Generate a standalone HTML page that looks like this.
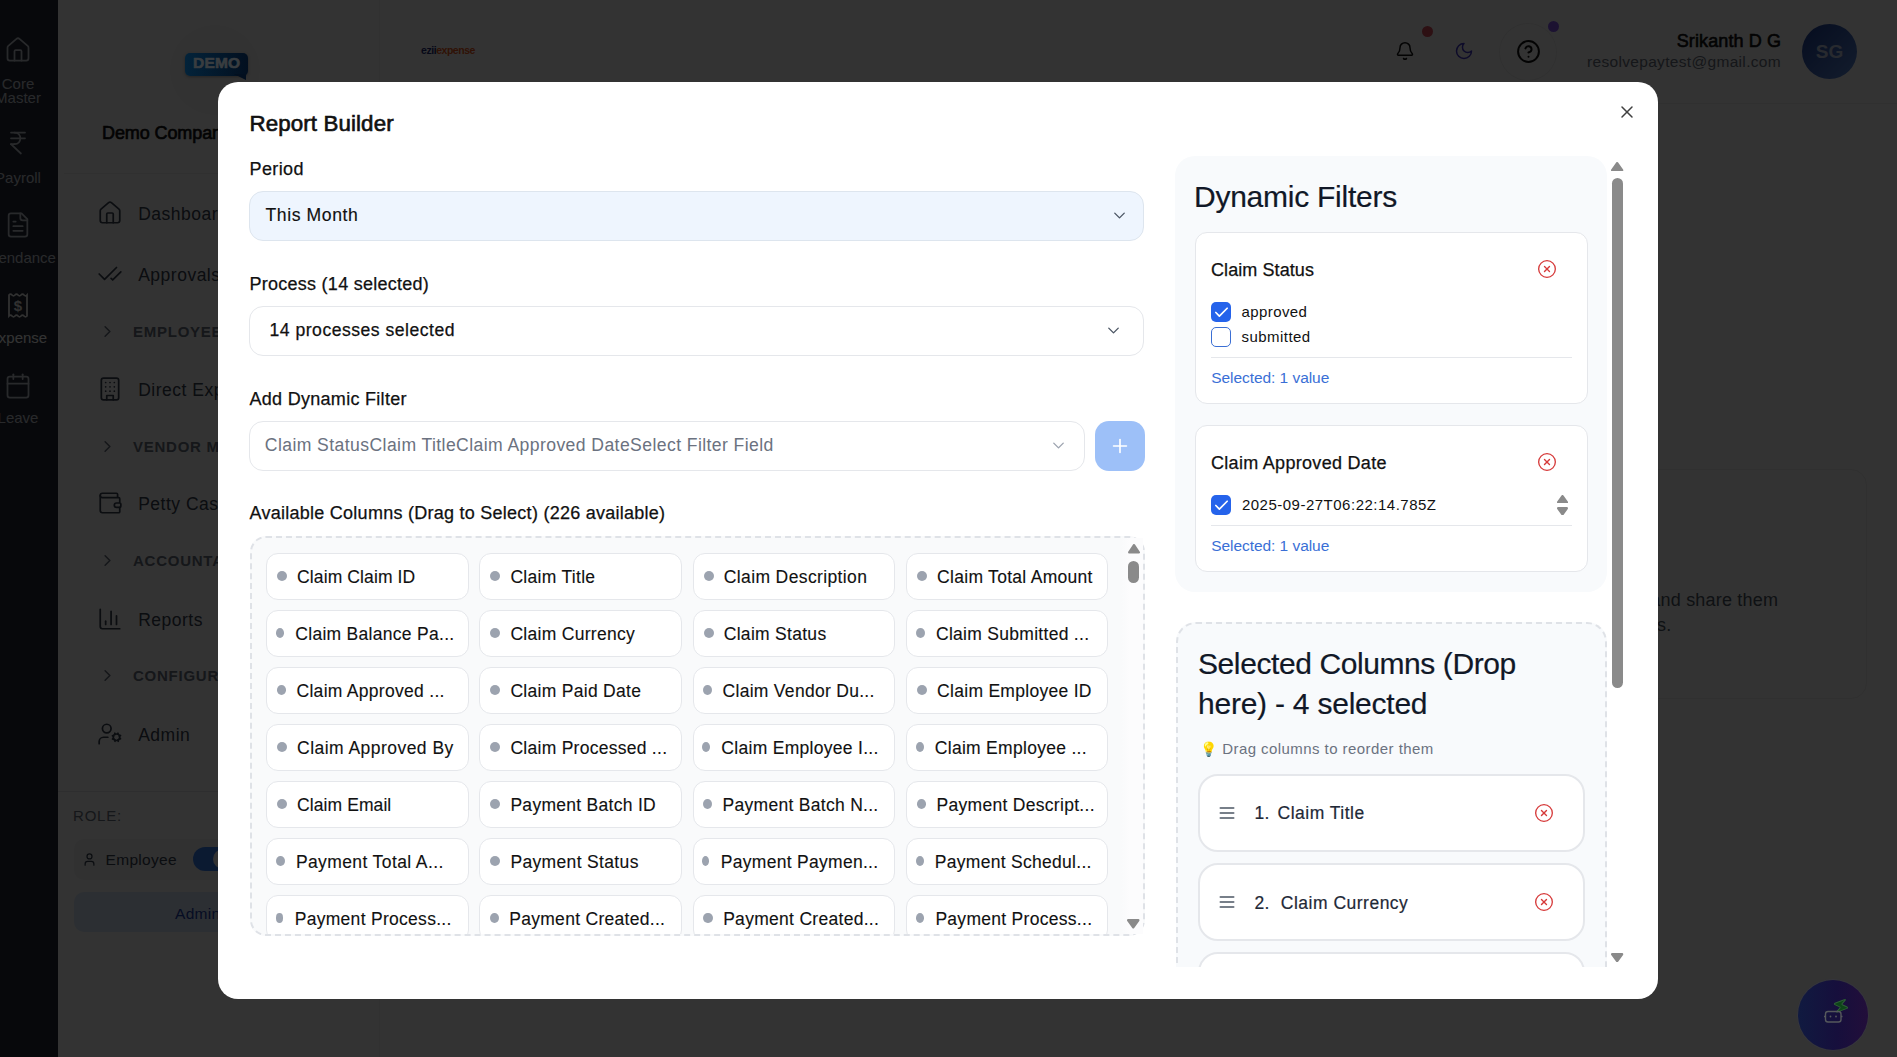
<!DOCTYPE html>
<html><head><meta charset="utf-8">
<style>
*{box-sizing:border-box;margin:0;padding:0}
html,body{width:1897px;height:1057px;overflow:hidden;background:#fff;font-family:"Liberation Sans",sans-serif;color:#111}
.abs{position:absolute}
.t{position:absolute;white-space:nowrap}
#overlay{position:absolute;left:0;top:0;width:1897px;height:1057px;background:rgba(0,0,0,0.8)}
</style></head><body>

<div class="abs" style="left:0px;top:0px;width:1897px;height:1057px;background:#fff"></div>
<div class="abs" style="left:0px;top:0px;width:58px;height:1057px;background:#232b3a;overflow:hidden"></div>
<div class="abs" style="left:0;top:0;width:58px;height:1057px;overflow:hidden">
<svg class="abs" style="left:4.0px;top:35.8px;" width="28" height="28" viewBox="0 0 24 24" fill="none" stroke="#c9ced6" stroke-width="1.5" stroke-linecap="round" stroke-linejoin="round"><path d="M15 21v-8a1 1 0 0 0-1-1h-4a1 1 0 0 0-1 1v8"/><path d="M3 10a2 2 0 0 1 .709-1.528l7-5.999a2 2 0 0 1 2.582 0l7 5.999A2 2 0 0 1 21 10v9a2 2 0 0 1-2 2H5a2 2 0 0 1-2-2z"/></svg>
<div class="t" style="left:-22px;width:80px;text-align:center;top:76.1px;font-size:15px;line-height:15px;color:#c9ced6">Core</div>
<div class="t" style="left:-22px;width:80px;text-align:center;top:90.0px;font-size:15px;line-height:15px;color:#c9ced6">Master</div>
<svg class="abs" style="left:4.0px;top:129.0px;" width="28" height="28" viewBox="0 0 24 24" fill="none" stroke="#c9ced6" stroke-width="1.5" stroke-linecap="round" stroke-linejoin="round"><path d="M6 3h12"/><path d="M6 8h12"/><path d="m6 13 8.5 8"/><path d="M6 13h3"/><path d="M9 13c6.667 0 6.667-10 0-10"/></svg>
<div class="t" style="left:-22px;width:80px;text-align:center;top:170.2px;font-size:15px;line-height:15px;color:#c9ced6">Payroll</div>
<svg class="abs" style="left:4.0px;top:210.6px;" width="28" height="28" viewBox="0 0 24 24" fill="none" stroke="#c9ced6" stroke-width="1.5" stroke-linecap="round" stroke-linejoin="round"><path d="M15 2H6a2 2 0 0 0-2 2v16a2 2 0 0 0 2 2h12a2 2 0 0 0 2-2V7Z"/><path d="M14 2v4a2 2 0 0 0 2 2h4"/><path d="M10 9H8"/><path d="M16 13H8"/><path d="M16 17H8"/></svg>
<div class="t" style="left:-22px;width:80px;text-align:center;top:250.10000000000002px;font-size:15px;line-height:15px;color:#c9ced6">Attendance</div>
<svg class="abs" style="left:7px;top:292px" width="22" height="27" viewBox="0 0 22 27" fill="none" stroke="#f2f2f2" stroke-width="1.8"><path d="M2 3 q1.5 -1.6 3 0 t3 0 t3 0 t3 0 t3 0 t3 0 V24 q-1.5 1.6 -3 0 t-3 0 t-3 0 t-3 0 t-3 0 t-3 0 Z"/><text x="11" y="19" text-anchor="middle" font-family="Liberation Sans" font-weight="700" font-size="15" fill="#f2f2f2" stroke="none">$</text></svg>
<div class="t" style="left:-22px;width:80px;text-align:center;top:330.3px;font-size:15px;line-height:15px;color:#ffffff">Expense</div>
<svg class="abs" style="left:4.0px;top:371.5px;" width="28" height="28" viewBox="0 0 24 24" fill="none" stroke="#c9ced6" stroke-width="1.5" stroke-linecap="round" stroke-linejoin="round"><path d="M8 2v4"/><path d="M16 2v4"/><rect width="18" height="18" x="3" y="4" rx="2"/><path d="M3 10h18"/></svg>
<div class="t" style="left:-22px;width:80px;text-align:center;top:409.8px;font-size:15px;line-height:15px;color:#c9ced6">Leave</div>
</div>
<div class="abs" style="left:58px;top:0px;width:322px;height:1057px;background:#fff;border-right:1px solid #f6f6f6"></div>
<div class="abs" style="left:170px;top:25px;width:90px;height:90px;border-radius:50%;background:#fafafa"></div>
<div class="t" style="left:102px;top:123.96px;font-size:18px;line-height:18px;color:#111;font-weight:400;letter-spacing:-0.1px;-webkit-text-stroke:0.65px #111;">Demo Company</div>
<div class="abs" style="left:64px;top:173px;width:310px;height:1px;background:#eee"></div>
<svg class="abs" style="left:97.3px;top:200.0px;" width="26" height="26" viewBox="0 0 24 24" fill="none" stroke="#374151" stroke-width="1.6" stroke-linecap="round" stroke-linejoin="round"><path d="M15 21v-8a1 1 0 0 0-1-1h-4a1 1 0 0 0-1 1v8"/><path d="M3 10a2 2 0 0 1 .709-1.528l7-5.999a2 2 0 0 1 2.582 0l7 5.999A2 2 0 0 1 21 10v9a2 2 0 0 1-2 2H5a2 2 0 0 1-2-2z"/></svg>
<div class="t" style="left:138.2px;top:206.09px;font-size:17.5px;line-height:17.5px;color:#374151;font-weight:400;letter-spacing:0.5px;">Dashboard</div>
<svg class="abs" style="left:97.3px;top:261.1px;" width="26" height="26" viewBox="0 0 24 24" fill="none" stroke="#374151" stroke-width="1.6" stroke-linecap="round" stroke-linejoin="round"><path d="M18 6 7 17l-5-5"/><path d="m22 10-7.5 7.5L13 16"/></svg>
<div class="t" style="left:138.2px;top:267.19px;font-size:17.5px;line-height:17.5px;color:#374151;font-weight:400;letter-spacing:0.5px;">Approvals</div>
<svg class="abs" style="left:98.1px;top:321.9px;" width="19" height="19" viewBox="0 0 24 24" fill="none" stroke="#6b7280" stroke-width="2" stroke-linecap="round" stroke-linejoin="round"><path d="m9 18 6-6-6-6"/></svg>
<div class="t" style="left:133px;top:323.90px;font-size:15px;line-height:15px;color:#6b7280;font-weight:700;letter-spacing:0.75px;">EMPLOYEE MANAGEMENT</div>
<svg class="abs" style="left:97.3px;top:376.1px;" width="26" height="26" viewBox="0 0 24 24" fill="none" stroke="#374151" stroke-width="1.6" stroke-linecap="round" stroke-linejoin="round"><rect width="16" height="20" x="4" y="2" rx="2" ry="2"/><path d="M9 22v-4h6v4"/><path d="M8 6h.01"/><path d="M16 6h.01"/><path d="M12 6h.01"/><path d="M12 10h.01"/><path d="M12 14h.01"/><path d="M16 10h.01"/><path d="M16 14h.01"/><path d="M8 10h.01"/><path d="M8 14h.01"/></svg>
<div class="t" style="left:138.2px;top:382.19px;font-size:17.5px;line-height:17.5px;color:#374151;font-weight:400;letter-spacing:0.5px;">Direct Expense</div>
<svg class="abs" style="left:98.1px;top:436.7px;" width="19" height="19" viewBox="0 0 24 24" fill="none" stroke="#6b7280" stroke-width="2" stroke-linecap="round" stroke-linejoin="round"><path d="m9 18 6-6-6-6"/></svg>
<div class="t" style="left:133px;top:438.70px;font-size:15px;line-height:15px;color:#6b7280;font-weight:700;letter-spacing:0.75px;">VENDOR MANAGEMENT</div>
<svg class="abs" style="left:97.3px;top:490.0px;" width="26" height="26" viewBox="0 0 24 24" fill="none" stroke="#374151" stroke-width="1.6" stroke-linecap="round" stroke-linejoin="round"><path d="M19 7V4a1 1 0 0 0-1-1H5a2 2 0 0 0 0 4h15a1 1 0 0 1 1 1v4h-3a2 2 0 0 0 0 4h3a1 1 0 0 0 1-1v-2a1 1 0 0 0-1-1"/><path d="M3 5v14a2 2 0 0 0 2 2h15a1 1 0 0 0 1-1v-4"/></svg>
<div class="t" style="left:138.2px;top:496.09px;font-size:17.5px;line-height:17.5px;color:#374151;font-weight:400;letter-spacing:0.5px;">Petty Cash</div>
<svg class="abs" style="left:98.1px;top:551.3px;" width="19" height="19" viewBox="0 0 24 24" fill="none" stroke="#6b7280" stroke-width="2" stroke-linecap="round" stroke-linejoin="round"><path d="m9 18 6-6-6-6"/></svg>
<div class="t" style="left:133px;top:553.30px;font-size:15px;line-height:15px;color:#6b7280;font-weight:700;letter-spacing:0.75px;">ACCOUNTANT</div>
<svg class="abs" style="left:97.3px;top:605.8px;" width="26" height="26" viewBox="0 0 24 24" fill="none" stroke="#374151" stroke-width="1.6" stroke-linecap="round" stroke-linejoin="round"><path d="M3 3v16a2 2 0 0 0 2 2h16"/><path d="M18 17V9"/><path d="M13 17V5"/><path d="M8 17v-3"/></svg>
<div class="t" style="left:138.2px;top:611.89px;font-size:17.5px;line-height:17.5px;color:#374151;font-weight:400;letter-spacing:0.5px;">Reports</div>
<svg class="abs" style="left:98.1px;top:665.8px;" width="19" height="19" viewBox="0 0 24 24" fill="none" stroke="#6b7280" stroke-width="2" stroke-linecap="round" stroke-linejoin="round"><path d="m9 18 6-6-6-6"/></svg>
<div class="t" style="left:133px;top:667.80px;font-size:15px;line-height:15px;color:#6b7280;font-weight:700;letter-spacing:0.75px;">CONFIGURATION</div>
<svg class="abs" style="left:97.3px;top:720.6999999999999px;" width="26" height="26" viewBox="0 0 24 24" fill="none" stroke="#374151" stroke-width="1.6" stroke-linecap="round" stroke-linejoin="round"><circle cx="18" cy="15" r="3"/><circle cx="9" cy="7" r="4"/><path d="M10 15H6a4 4 0 0 0-4 4v2"/><path d="m21.7 16.4-.9-.3"/><path d="m15.2 13.9-.9-.3"/><path d="m16.6 18.7.3-.9"/><path d="m19.1 12.2.3-.9"/><path d="m19.6 18.7-.4-1"/><path d="m16.8 12.3-.4-1"/><path d="m14.3 16.6 1-.4"/><path d="m20.7 13.8 1-.4"/></svg>
<div class="t" style="left:138.2px;top:726.79px;font-size:17.5px;line-height:17.5px;color:#374151;font-weight:400;letter-spacing:0.5px;">Admin</div>
<div class="abs" style="left:58px;top:791px;width:322px;height:1px;background:#e5e7eb"></div>
<div class="t" style="left:73px;top:808.30px;font-size:15px;line-height:15px;color:#6b7280;font-weight:400;letter-spacing:0.8px;">ROLE:</div>
<div class="abs" style="left:74px;top:839px;width:290px;height:41px;background:#f3f4f6;border-radius:10px"></div>
<svg class="abs" style="left:82.2px;top:852.0px;" width="15" height="15" viewBox="0 0 24 24" fill="none" stroke="#374151" stroke-width="2" stroke-linecap="round" stroke-linejoin="round"><path d="M19 21v-2a4 4 0 0 0-4-4H9a4 4 0 0 0-4 4v2"/><circle cx="12" cy="7" r="4"/></svg>
<div class="t" style="left:105.6px;top:851.88px;font-size:15.5px;line-height:15.5px;color:#374151;font-weight:400;letter-spacing:0.3px;">Employee</div>
<div class="abs" style="left:193px;top:847px;width:44px;height:24px;background:#3b82f6;border-radius:12px"></div>
<div class="abs" style="left:213px;top:849px;width:20px;height:20px;background:#fff;border-radius:50%"></div>
<div class="abs" style="left:74px;top:892px;width:290px;height:40px;background:#dbeafe;border-radius:10px"></div>
<div class="t" style="left:175px;top:905.88px;font-size:15.5px;line-height:15.5px;color:#1e40af;font-weight:400;letter-spacing:0.3px;">Admin</div>
<div class="abs" style="left:380px;top:0px;width:1517px;height:104px;background:#fff;border-bottom:1px solid #f0f0f0"></div>
<div class="t" style="left:421px;top:43px;font-size:10.5px;line-height:14px;font-weight:700;letter-spacing:-0.45px"><span style="color:#1e2a78">ezii</span><span style="color:#f05a1a">expense</span></div>
<svg class="abs" style="left:1395.0px;top:40.9px;" width="20" height="20" viewBox="0 0 24 24" fill="none" stroke="#111" stroke-width="1.8" stroke-linecap="round" stroke-linejoin="round"><path d="M10.268 21a2 2 0 0 0 3.464 0"/><path d="M3.262 15.326A1 1 0 0 0 4 17h16a1 1 0 0 0 .74-1.673C19.41 13.956 18 12.499 18 8A6 6 0 0 0 6 8c0 4.499-1.411 5.956-2.738 7.326"/></svg>
<div class="abs" style="left:1422px;top:25.7px;width:11px;height:11px;border-radius:50%;background:#e05060"></div>
<svg class="abs" style="left:1454.3px;top:40.5px;" width="20" height="20" viewBox="0 0 24 24" fill="none" stroke="#4338ca" stroke-width="1.8" stroke-linecap="round" stroke-linejoin="round"><path d="M12 3a6 6 0 0 0 9 9 9 9 0 1 1-9-9Z"/></svg>
<div class="abs" style="left:1500px;top:24px;width:56px;height:56px;border-radius:50%;background:#fff;box-shadow:0 0 0 1px #f0f0f0"></div>
<svg class="abs" style="left:1515.9px;top:38.9px;" width="25" height="25" viewBox="0 0 24 24" fill="none" stroke="#111" stroke-width="1.9" stroke-linecap="round" stroke-linejoin="round"><circle cx="12" cy="12" r="10"/><path d="M9.09 9a3 3 0 0 1 5.83 1c0 2-3 3-3 3"/><path d="M12 17h.01"/></svg>
<div class="abs" style="left:1548.2px;top:21px;width:11px;height:11px;border-radius:50%;background:#8b5cf6"></div>
<div class="t" style="right:116px;top:31.66px;font-size:18px;line-height:18px;color:#111;font-weight:400;letter-spacing:0.1px;-webkit-text-stroke:0.6px #111;">Srikanth D G</div>
<div class="t" style="right:116px;top:53.58px;font-size:15.5px;line-height:15.5px;color:#6b7280;font-weight:400;letter-spacing:0.32px;">resolvepaytest@gmail.com</div>
<div class="abs" style="left:1802px;top:24px;width:55px;height:55px;border-radius:50%;background:linear-gradient(135deg,#1f3f9a,#5f8fe0);color:#c7d3ea;font-weight:700;font-size:19px;line-height:55px;text-align:center">SG</div>
<div class="abs" style="left:1620px;top:469px;width:247px;height:230px;background:#fff;border:1px solid #eee;border-radius:16px"></div>
<div class="t" style="right:118.79999999999995px;top:591.46px;font-size:18px;line-height:18px;color:#4b5563;font-weight:400;letter-spacing:0.2px;">and share them</div>
<div class="t" style="right:225.5999999999999px;top:616.36px;font-size:18px;line-height:18px;color:#4b5563;font-weight:400;letter-spacing:0.2px;">reports.</div>
<div id="overlay"></div>
<div class="abs" style="left:185px;top:53px;width:63px;height:23px;background:linear-gradient(90deg,#03233a,#020f1f);border-radius:5px;color:#3c4146;font-weight:700;font-size:15px;line-height:23px;text-align:center;letter-spacing:0.3px;-webkit-text-stroke:0.6px #3c4146;box-shadow:0 1px 3px rgba(0,0,0,0.3)"></div>
<div class="t" style="left:193px;top:55px;font-size:15.5px;line-height:16px;font-weight:700;color:#393d40;letter-spacing:0.2px;-webkit-text-stroke:0.7px #393d40">DEMO</div>
<div class="abs" style="left:234px;top:74px;width:0;height:0;border-left:12px solid transparent;border-top:6px solid #020f1f"></div>
<div class="abs" style="left:1798px;top:980px;width:70px;height:70px;border-radius:50%;background:linear-gradient(90deg,#101a40,#160f3c 55%,#220e3a);box-shadow:0 0 0 1px rgba(60,60,90,0.25)"></div>
<svg class="abs" style="left:1818px;top:995px" width="34" height="34" viewBox="0 0 34 34"><g transform="translate(14.5,1.5) rotate(25 8 8) scale(0.75)"><path d="M4 14a1 1 0 0 1-.78-1.63l9.9-10.2a.5.5 0 0 1 .86.46l-1.92 6.02A1 1 0 0 0 13 10h7a1 1 0 0 1 .78 1.63l-9.9 10.2a.5.5 0 0 1-.86-.46l1.92-6.02A1 1 0 0 0 11 14z" fill="#0d4518" stroke="#2f5f36" stroke-width="1.3" stroke-linejoin="round"/></g><rect x="7.5" y="16.5" width="15.5" height="10.5" rx="2.5" fill="none" stroke="#55585c" stroke-width="1.4"/><path d="M6 21.5h1.5M23 21.5h1.5" stroke="#55585c" stroke-width="1.4"/><circle cx="12.5" cy="21.5" r="0.9" fill="#55585c"/><circle cx="18" cy="21.5" r="0.9" fill="#55585c"/></svg>
<div class="abs" style="left:218px;top:82px;width:1440px;height:917px;background:#fff;border-radius:20px"></div>
<div class="t" style="left:249.5px;top:113.12px;font-size:22.3px;line-height:22.3px;color:#111;font-weight:400;letter-spacing:0.12px;-webkit-text-stroke:0.65px #111;">Report Builder</div>
<svg class="abs" style="left:1616.5px;top:102.4px;" width="20" height="20" viewBox="0 0 24 24" fill="none" stroke="#404040" stroke-width="1.8" stroke-linecap="round" stroke-linejoin="round"><path d="M18 6 6 18"/><path d="m6 6 12 12"/></svg>
<div class="t" style="left:249.5px;top:159.56px;font-size:18px;line-height:18px;color:#111;font-weight:400;letter-spacing:0.4px;-webkit-text-stroke:0.25px #111;">Period</div>
<div class="abs" style="left:249px;top:191px;width:895px;height:50px;background:#eef5fe;border:1px solid #dde5ee;border-radius:14px"></div>
<div class="t" style="left:265.5px;top:206.90px;font-size:17.6px;line-height:17.6px;color:#111;font-weight:400;letter-spacing:0.58px;-webkit-text-stroke:0.15px #111;">This Month</div>
<svg class="abs" style="left:1109.5px;top:206.0px;" width="19" height="19" viewBox="0 0 24 24" fill="none" stroke="#4b5563" stroke-width="1.7" stroke-linecap="round" stroke-linejoin="round"><path d="m6 9 6 6 6-6"/></svg>
<div class="t" style="left:249.5px;top:274.66px;font-size:18px;line-height:18px;color:#111;font-weight:400;letter-spacing:0.26px;-webkit-text-stroke:0.25px #111;">Process (14 selected)</div>
<div class="abs" style="left:249px;top:306px;width:895px;height:50px;background:#fff;border:1px solid #e5e7eb;border-radius:14px"></div>
<div class="t" style="left:269.5px;top:322.00px;font-size:17.6px;line-height:17.6px;color:#111;font-weight:400;letter-spacing:0.5px;-webkit-text-stroke:0.25px #111;">14 processes selected</div>
<svg class="abs" style="left:1104.0px;top:321.0px;" width="19" height="19" viewBox="0 0 24 24" fill="none" stroke="#4b5563" stroke-width="1.7" stroke-linecap="round" stroke-linejoin="round"><path d="m6 9 6 6 6-6"/></svg>
<div class="t" style="left:249.5px;top:389.76px;font-size:18px;line-height:18px;color:#111;font-weight:400;letter-spacing:0.29px;-webkit-text-stroke:0.25px #111;">Add Dynamic Filter</div>
<div class="abs" style="left:249px;top:421px;width:836px;height:50px;background:#fff;border:1px solid #e5e7eb;border-radius:14px"></div>
<div class="t" style="left:264.8px;top:436.90px;font-size:17.6px;line-height:17.6px;color:#6b7280;font-weight:400;letter-spacing:0.41px;">Claim StatusClaim TitleClaim Approved DateSelect Filter Field</div>
<svg class="abs" style="left:1048.5px;top:436.0px;" width="19" height="19" viewBox="0 0 24 24" fill="none" stroke="#9ca3af" stroke-width="1.7" stroke-linecap="round" stroke-linejoin="round"><path d="m6 9 6 6 6-6"/></svg>
<div class="abs" style="left:1095px;top:421px;width:50px;height:50px;background:#9dc0f8;border-radius:14px"></div>
<svg class="abs" style="left:1109.0px;top:435.0px;" width="22" height="22" viewBox="0 0 24 24" fill="none" stroke="#fff" stroke-width="1.8" stroke-linecap="round" stroke-linejoin="round"><path d="M5 12h14"/><path d="M12 5v14"/></svg>
<div class="t" style="left:249.5px;top:504.36px;font-size:18px;line-height:18px;color:#111;font-weight:400;letter-spacing:0.26px;-webkit-text-stroke:0.25px #111;">Available Columns (Drag to Select) (226 available)</div>
<div class="abs" style="left:250px;top:536px;width:895px;height:400px;background:#f9fafb;border:2px dashed #dfe2e7;border-radius:16px"></div>
<div class="abs" style="left:252px;top:539px;width:891px;height:395px;overflow:hidden;border-radius:14px">
<div class="abs" style="left:14.00px;top:14.00px;width:202.5px;height:46.5px;background:#fff;border:1px solid #e5e7eb;border-radius:12px"></div>
<div class="abs" style="left:25.00px;top:31.50px;width:10.00px;height:10px;border-radius:50%;background:#9ca3af"></div>
<div class="t" style="left:45.10px;top:30.39px;font-size:17.5px;line-height:17.5px;color:#111;letter-spacing:0.10999999999999999px;-webkit-text-stroke:0.12px #111">Claim Claim ID</div>
<div class="abs" style="left:227.33px;top:14.00px;width:202.5px;height:46.5px;background:#fff;border:1px solid #e5e7eb;border-radius:12px"></div>
<div class="abs" style="left:238.33px;top:31.50px;width:10.00px;height:10px;border-radius:50%;background:#9ca3af"></div>
<div class="t" style="left:258.43px;top:30.39px;font-size:17.5px;line-height:17.5px;color:#111;letter-spacing:0.29999999999999993px;-webkit-text-stroke:0.12px #111">Claim Title</div>
<div class="abs" style="left:440.66px;top:14.00px;width:202.5px;height:46.5px;background:#fff;border:1px solid #e5e7eb;border-radius:12px"></div>
<div class="abs" style="left:451.66px;top:31.50px;width:10.00px;height:10px;border-radius:50%;background:#9ca3af"></div>
<div class="t" style="left:471.76px;top:30.39px;font-size:17.5px;line-height:17.5px;color:#111;letter-spacing:0.38px;-webkit-text-stroke:0.12px #111">Claim Description</div>
<div class="abs" style="left:653.99px;top:14.00px;width:202.5px;height:46.5px;background:#fff;border:1px solid #e5e7eb;border-radius:12px"></div>
<div class="abs" style="left:664.99px;top:31.50px;width:10.00px;height:10px;border-radius:50%;background:#9ca3af"></div>
<div class="t" style="left:685.09px;top:30.39px;font-size:17.5px;line-height:17.5px;color:#111;letter-spacing:0.29000000000000004px;-webkit-text-stroke:0.12px #111">Claim Total Amount</div>
<div class="abs" style="left:14.00px;top:71.00px;width:202.5px;height:46.5px;background:#fff;border:1px solid #e5e7eb;border-radius:12px"></div>
<div class="abs" style="left:23.92px;top:88.50px;width:8.38px;height:10px;border-radius:50%;background:#9ca3af"></div>
<div class="t" style="left:43.30px;top:87.39px;font-size:17.5px;line-height:17.5px;color:#111;letter-spacing:0.29000000000000004px;-webkit-text-stroke:0.12px #111">Claim Balance Pa...</div>
<div class="abs" style="left:227.33px;top:71.00px;width:202.5px;height:46.5px;background:#fff;border:1px solid #e5e7eb;border-radius:12px"></div>
<div class="abs" style="left:238.33px;top:88.50px;width:10.00px;height:10px;border-radius:50%;background:#9ca3af"></div>
<div class="t" style="left:258.43px;top:87.39px;font-size:17.5px;line-height:17.5px;color:#111;letter-spacing:0.29000000000000004px;-webkit-text-stroke:0.12px #111">Claim Currency</div>
<div class="abs" style="left:440.66px;top:71.00px;width:202.5px;height:46.5px;background:#fff;border:1px solid #e5e7eb;border-radius:12px"></div>
<div class="abs" style="left:451.66px;top:88.50px;width:10.00px;height:10px;border-radius:50%;background:#9ca3af"></div>
<div class="t" style="left:471.76px;top:87.39px;font-size:17.5px;line-height:17.5px;color:#111;letter-spacing:0.29000000000000004px;-webkit-text-stroke:0.12px #111">Claim Status</div>
<div class="abs" style="left:653.99px;top:71.00px;width:202.5px;height:46.5px;background:#fff;border:1px solid #e5e7eb;border-radius:12px"></div>
<div class="abs" style="left:664.33px;top:88.50px;width:9.01px;height:10px;border-radius:50%;background:#9ca3af"></div>
<div class="t" style="left:683.99px;top:87.39px;font-size:17.5px;line-height:17.5px;color:#111;letter-spacing:0.29000000000000004px;-webkit-text-stroke:0.12px #111">Claim Submitted ...</div>
<div class="abs" style="left:14.00px;top:128.00px;width:202.5px;height:46.5px;background:#fff;border:1px solid #e5e7eb;border-radius:12px"></div>
<div class="abs" style="left:24.64px;top:145.50px;width:9.46px;height:10px;border-radius:50%;background:#9ca3af"></div>
<div class="t" style="left:44.50px;top:144.39px;font-size:17.5px;line-height:17.5px;color:#111;letter-spacing:0.29000000000000004px;-webkit-text-stroke:0.12px #111">Claim Approved ...</div>
<div class="abs" style="left:227.33px;top:128.00px;width:202.5px;height:46.5px;background:#fff;border:1px solid #e5e7eb;border-radius:12px"></div>
<div class="abs" style="left:238.33px;top:145.50px;width:10.00px;height:10px;border-radius:50%;background:#9ca3af"></div>
<div class="t" style="left:258.43px;top:144.39px;font-size:17.5px;line-height:17.5px;color:#111;letter-spacing:0.29000000000000004px;-webkit-text-stroke:0.12px #111">Claim Paid Date</div>
<div class="abs" style="left:440.66px;top:128.00px;width:202.5px;height:46.5px;background:#fff;border:1px solid #e5e7eb;border-radius:12px"></div>
<div class="abs" style="left:450.94px;top:145.50px;width:8.92px;height:10px;border-radius:50%;background:#9ca3af"></div>
<div class="t" style="left:470.56px;top:144.39px;font-size:17.5px;line-height:17.5px;color:#111;letter-spacing:0.29000000000000004px;-webkit-text-stroke:0.12px #111">Claim Vendor Du...</div>
<div class="abs" style="left:653.99px;top:128.00px;width:202.5px;height:46.5px;background:#fff;border:1px solid #e5e7eb;border-radius:12px"></div>
<div class="abs" style="left:664.99px;top:145.50px;width:10.00px;height:10px;border-radius:50%;background:#9ca3af"></div>
<div class="t" style="left:685.09px;top:144.39px;font-size:17.5px;line-height:17.5px;color:#111;letter-spacing:0.29000000000000004px;-webkit-text-stroke:0.12px #111">Claim Employee ID</div>
<div class="abs" style="left:14.00px;top:185.00px;width:202.5px;height:46.5px;background:#fff;border:1px solid #e5e7eb;border-radius:12px"></div>
<div class="abs" style="left:25.00px;top:202.50px;width:10.00px;height:10px;border-radius:50%;background:#9ca3af"></div>
<div class="t" style="left:45.10px;top:201.39px;font-size:17.5px;line-height:17.5px;color:#111;letter-spacing:0.45999999999999996px;-webkit-text-stroke:0.12px #111">Claim Approved By</div>
<div class="abs" style="left:227.33px;top:185.00px;width:202.5px;height:46.5px;background:#fff;border:1px solid #e5e7eb;border-radius:12px"></div>
<div class="abs" style="left:238.33px;top:202.50px;width:10.00px;height:10px;border-radius:50%;background:#9ca3af"></div>
<div class="t" style="left:258.43px;top:201.39px;font-size:17.5px;line-height:17.5px;color:#111;letter-spacing:0.27px;-webkit-text-stroke:0.12px #111">Claim Processed ...</div>
<div class="abs" style="left:440.66px;top:185.00px;width:202.5px;height:46.5px;background:#fff;border:1px solid #e5e7eb;border-radius:12px"></div>
<div class="abs" style="left:450.22px;top:202.50px;width:7.84px;height:10px;border-radius:50%;background:#9ca3af"></div>
<div class="t" style="left:469.36px;top:201.39px;font-size:17.5px;line-height:17.5px;color:#111;letter-spacing:0.29000000000000004px;-webkit-text-stroke:0.12px #111">Claim Employee I...</div>
<div class="abs" style="left:653.99px;top:185.00px;width:202.5px;height:46.5px;background:#fff;border:1px solid #e5e7eb;border-radius:12px"></div>
<div class="abs" style="left:663.61px;top:202.50px;width:7.93px;height:10px;border-radius:50%;background:#9ca3af"></div>
<div class="t" style="left:682.79px;top:201.39px;font-size:17.5px;line-height:17.5px;color:#111;letter-spacing:0.29000000000000004px;-webkit-text-stroke:0.12px #111">Claim Employee ...</div>
<div class="abs" style="left:14.00px;top:242.00px;width:202.5px;height:46.5px;background:#fff;border:1px solid #e5e7eb;border-radius:12px"></div>
<div class="abs" style="left:25.00px;top:259.50px;width:10.00px;height:10px;border-radius:50%;background:#9ca3af"></div>
<div class="t" style="left:45.10px;top:258.39px;font-size:17.5px;line-height:17.5px;color:#111;letter-spacing:0.07999999999999996px;-webkit-text-stroke:0.12px #111">Claim Email</div>
<div class="abs" style="left:227.33px;top:242.00px;width:202.5px;height:46.5px;background:#fff;border:1px solid #e5e7eb;border-radius:12px"></div>
<div class="abs" style="left:238.33px;top:259.50px;width:10.00px;height:10px;border-radius:50%;background:#9ca3af"></div>
<div class="t" style="left:258.43px;top:258.39px;font-size:17.5px;line-height:17.5px;color:#111;letter-spacing:0.28px;-webkit-text-stroke:0.12px #111">Payment Batch ID</div>
<div class="abs" style="left:440.66px;top:242.00px;width:202.5px;height:46.5px;background:#fff;border:1px solid #e5e7eb;border-radius:12px"></div>
<div class="abs" style="left:450.94px;top:259.50px;width:8.92px;height:10px;border-radius:50%;background:#9ca3af"></div>
<div class="t" style="left:470.56px;top:258.39px;font-size:17.5px;line-height:17.5px;color:#111;letter-spacing:0.29000000000000004px;-webkit-text-stroke:0.12px #111">Payment Batch N...</div>
<div class="abs" style="left:653.99px;top:242.00px;width:202.5px;height:46.5px;background:#fff;border:1px solid #e5e7eb;border-radius:12px"></div>
<div class="abs" style="left:664.69px;top:259.50px;width:9.55px;height:10px;border-radius:50%;background:#9ca3af"></div>
<div class="t" style="left:684.59px;top:258.39px;font-size:17.5px;line-height:17.5px;color:#111;letter-spacing:0.29000000000000004px;-webkit-text-stroke:0.12px #111">Payment Descript...</div>
<div class="abs" style="left:14.00px;top:299.00px;width:202.5px;height:46.5px;background:#fff;border:1px solid #e5e7eb;border-radius:12px"></div>
<div class="abs" style="left:24.28px;top:316.50px;width:8.92px;height:10px;border-radius:50%;background:#9ca3af"></div>
<div class="t" style="left:43.90px;top:315.39px;font-size:17.5px;line-height:17.5px;color:#111;letter-spacing:0.39px;-webkit-text-stroke:0.12px #111">Payment Total A...</div>
<div class="abs" style="left:227.33px;top:299.00px;width:202.5px;height:46.5px;background:#fff;border:1px solid #e5e7eb;border-radius:12px"></div>
<div class="abs" style="left:238.33px;top:316.50px;width:10.00px;height:10px;border-radius:50%;background:#9ca3af"></div>
<div class="t" style="left:258.43px;top:315.39px;font-size:17.5px;line-height:17.5px;color:#111;letter-spacing:0.33999999999999997px;-webkit-text-stroke:0.12px #111">Payment Status</div>
<div class="abs" style="left:440.66px;top:299.00px;width:202.5px;height:46.5px;background:#fff;border:1px solid #e5e7eb;border-radius:12px"></div>
<div class="abs" style="left:449.86px;top:316.50px;width:7.30px;height:10px;border-radius:50%;background:#9ca3af"></div>
<div class="t" style="left:468.76px;top:315.39px;font-size:17.5px;line-height:17.5px;color:#111;letter-spacing:0.29000000000000004px;-webkit-text-stroke:0.12px #111">Payment Paymen...</div>
<div class="abs" style="left:653.99px;top:299.00px;width:202.5px;height:46.5px;background:#fff;border:1px solid #e5e7eb;border-radius:12px"></div>
<div class="abs" style="left:663.61px;top:316.50px;width:7.93px;height:10px;border-radius:50%;background:#9ca3af"></div>
<div class="t" style="left:682.79px;top:315.39px;font-size:17.5px;line-height:17.5px;color:#111;letter-spacing:0.29000000000000004px;-webkit-text-stroke:0.12px #111">Payment Schedul...</div>
<div class="abs" style="left:14.00px;top:356.00px;width:202.5px;height:46.5px;background:#fff;border:1px solid #e5e7eb;border-radius:12px"></div>
<div class="abs" style="left:23.56px;top:373.50px;width:7.84px;height:10px;border-radius:50%;background:#9ca3af"></div>
<div class="t" style="left:42.70px;top:372.39px;font-size:17.5px;line-height:17.5px;color:#111;letter-spacing:0.29000000000000004px;-webkit-text-stroke:0.12px #111">Payment Process...</div>
<div class="abs" style="left:227.33px;top:356.00px;width:202.5px;height:46.5px;background:#fff;border:1px solid #e5e7eb;border-radius:12px"></div>
<div class="abs" style="left:237.61px;top:373.50px;width:8.92px;height:10px;border-radius:50%;background:#9ca3af"></div>
<div class="t" style="left:257.23px;top:372.39px;font-size:17.5px;line-height:17.5px;color:#111;letter-spacing:0.29000000000000004px;-webkit-text-stroke:0.12px #111">Payment Created...</div>
<div class="abs" style="left:440.66px;top:356.00px;width:202.5px;height:46.5px;background:#fff;border:1px solid #e5e7eb;border-radius:12px"></div>
<div class="abs" style="left:451.30px;top:373.50px;width:9.46px;height:10px;border-radius:50%;background:#9ca3af"></div>
<div class="t" style="left:471.16px;top:372.39px;font-size:17.5px;line-height:17.5px;color:#111;letter-spacing:0.29000000000000004px;-webkit-text-stroke:0.12px #111">Payment Created...</div>
<div class="abs" style="left:653.99px;top:356.00px;width:202.5px;height:46.5px;background:#fff;border:1px solid #e5e7eb;border-radius:12px"></div>
<div class="abs" style="left:663.97px;top:373.50px;width:8.47px;height:10px;border-radius:50%;background:#9ca3af"></div>
<div class="t" style="left:683.39px;top:372.39px;font-size:17.5px;line-height:17.5px;color:#111;letter-spacing:0.29000000000000004px;-webkit-text-stroke:0.12px #111">Payment Process...</div>
</div>
<div class="abs" style="left:1121px;top:538px;width:22px;height:396px;background:linear-gradient(90deg,#f9fafb,#fcfcfd 40%)"></div>
<svg class="abs" style="left:1127.5px;top:544px" width="12" height="9.5"><polygon points="6.0,1.2 10.8,8.3 1.2,8.3" fill="#8a8a8a" stroke="#8a8a8a" stroke-width="2.4" stroke-linejoin="round"/></svg>
<div class="abs" style="left:1128px;top:561px;width:11px;height:22px;background:#8a8a8a;border-radius:6px"></div>
<svg class="abs" style="left:1127.45px;top:919px" width="12.5" height="9.5"><polygon points="1.2,1.2 11.3,1.2 6.25,8.3" fill="#8a8a8a" stroke="#8a8a8a" stroke-width="2.4" stroke-linejoin="round"/></svg>
<div class="abs" style="left:1175px;top:156px;width:453px;height:811px;overflow:hidden">
<div class="abs" style="left:0px;top:0px;width:432px;height:436px;background:#f8fafc;border-radius:20px"></div>
<div class="t" style="left:19px;top:25.91px;font-size:30px;line-height:30px;color:#111827;font-weight:400;letter-spacing:-0.25px;-webkit-text-stroke:0.2px #111827;">Dynamic Filters</div>
<div class="abs" style="left:20px;top:75.5px;width:393px;height:172px;background:#fff;border:1px solid #e5e7eb;border-radius:12px"></div>
<div class="t" style="left:36px;top:104.66px;font-size:18px;line-height:18px;color:#111;font-weight:400;letter-spacing:0.08px;-webkit-text-stroke:0.25px #111;">Claim Status</div>
<svg class="abs" style="left:362.0px;top:103.0px;" width="20" height="20" viewBox="0 0 24 24" fill="none" stroke="#d63a3a" stroke-width="1.6" stroke-linecap="round" stroke-linejoin="round"><circle cx="12" cy="12" r="10"/><path d="m15 9-6 6"/><path d="m9 9 6 6"/></svg>
<div class="abs" style="left:36px;top:146px;width:20px;height:20px;background:#2563eb;border-radius:5px"></div>
<svg class="abs" style="left:37.5px;top:147.5px;" width="17" height="17" viewBox="0 0 24 24" fill="none" stroke="#fff" stroke-width="2.4" stroke-linecap="round" stroke-linejoin="round"><path d="M20 6 9 17l-5-5"/></svg>
<div class="t" style="left:66.59999999999991px;top:148.20px;font-size:15px;line-height:15px;color:#111;font-weight:400;letter-spacing:0.4px;">approved</div>
<div class="abs" style="left:36px;top:171px;width:20px;height:20px;background:#fff;border:1.3px solid #3b6fd4;border-radius:5px"></div>
<div class="t" style="left:66.59999999999991px;top:173.10px;font-size:15px;line-height:15px;color:#111;font-weight:400;letter-spacing:0.44px;">submitted</div>
<div class="abs" style="left:36px;top:201px;width:361px;height:1px;background:#e5e7eb"></div>
<div class="t" style="left:36.200000000000045px;top:213.88px;font-size:15.5px;line-height:15.5px;color:#3a6fd6;font-weight:400;letter-spacing:-0.05px;">Selected: 1 value</div>
<div class="abs" style="left:20px;top:268.5px;width:393px;height:147px;background:#fff;border:1px solid #e5e7eb;border-radius:12px"></div>
<div class="t" style="left:36px;top:298.06px;font-size:18px;line-height:18px;color:#111;font-weight:400;letter-spacing:0.3px;-webkit-text-stroke:0.25px #111;">Claim Approved Date</div>
<svg class="abs" style="left:362.0px;top:296.0px;" width="20" height="20" viewBox="0 0 24 24" fill="none" stroke="#d63a3a" stroke-width="1.6" stroke-linecap="round" stroke-linejoin="round"><circle cx="12" cy="12" r="10"/><path d="m15 9-6 6"/><path d="m9 9 6 6"/></svg>
<div class="abs" style="left:36px;top:339px;width:20px;height:20px;background:#2563eb;border-radius:5px"></div>
<svg class="abs" style="left:37.5px;top:340.5px;" width="17" height="17" viewBox="0 0 24 24" fill="none" stroke="#fff" stroke-width="2.4" stroke-linecap="round" stroke-linejoin="round"><path d="M20 6 9 17l-5-5"/></svg>
<div class="t" style="left:66.90000000000009px;top:341.00px;font-size:15px;line-height:15px;color:#111;font-weight:400;letter-spacing:0.5px;">2025-09-27T06:22:14.785Z</div>
<svg class="abs" style="left:381.5px;top:338.7px" width="11" height="8.5"><polygon points="5.5,1.2 9.8,7.3 1.2,7.3" fill="#8a8a8a" stroke="#8a8a8a" stroke-width="2.4" stroke-linejoin="round"/></svg>
<svg class="abs" style="left:381.5px;top:350.5px" width="11" height="8.5"><polygon points="1.2,1.2 9.8,1.2 5.5,7.3" fill="#8a8a8a" stroke="#8a8a8a" stroke-width="2.4" stroke-linejoin="round"/></svg>
<div class="abs" style="left:36px;top:369px;width:361px;height:1px;background:#e5e7eb"></div>
<div class="t" style="left:36.200000000000045px;top:381.68px;font-size:15.5px;line-height:15.5px;color:#3a6fd6;font-weight:400;letter-spacing:-0.05px;">Selected: 1 value</div>
<div class="abs" style="left:1px;top:466px;width:431px;height:420px;background:#f8fafc;border:2px dashed #dfe2e7;border-radius:20px"></div>
<div class="t" style="left:23px;top:493.40px;font-size:30px;line-height:30px;color:#111827;font-weight:400;letter-spacing:-0.41px;-webkit-text-stroke:0.2px #111827;">Selected Columns (Drop</div>
<div class="t" style="left:23px;top:533.21px;font-size:30px;line-height:30px;color:#111827;font-weight:400;letter-spacing:-0.23px;-webkit-text-stroke:0.2px #111827;">here) - 4 selected</div>
<div class="t" style="left:25px;top:585.95px;font-size:14px;line-height:14px;color:#f5b400;font-weight:400;letter-spacing:0.0px;">💡</div>
<div class="t" style="left:47.200000000000045px;top:585.10px;font-size:15px;line-height:15px;color:#6b7280;font-weight:400;letter-spacing:0.44px;">Drag columns to reorder them</div>
<div class="abs" style="left:23px;top:618px;width:387px;height:78px;background:#fff;border:2px solid #e5e7eb;border-radius:20px"></div>
<svg class="abs" style="left:41.700000000000045px;top:646.5px;" width="20" height="20" viewBox="0 0 24 24" fill="none" stroke="#4b5563" stroke-width="2" stroke-linecap="round" stroke-linejoin="round"><line x1="4" x2="20" y1="12" y2="12"/><line x1="4" x2="20" y1="6" y2="6"/><line x1="4" x2="20" y1="18" y2="18"/></svg>
<div class="t" style="left:79.40000000000009px;top:649.49px;font-size:17.5px;line-height:17.5px;color:#1f2937;font-weight:400;letter-spacing:0.5px;-webkit-text-stroke:0.2px #1f2937;">1.</div>
<div class="t" style="left:102.5px;top:649.49px;font-size:17.5px;line-height:17.5px;color:#1f2937;font-weight:400;letter-spacing:0.5px;-webkit-text-stroke:0.2px #1f2937;">Claim Title</div>
<svg class="abs" style="left:358.79999999999995px;top:646.5px;" width="20" height="20" viewBox="0 0 24 24" fill="none" stroke="#d63a3a" stroke-width="1.6" stroke-linecap="round" stroke-linejoin="round"><circle cx="12" cy="12" r="10"/><path d="m15 9-6 6"/><path d="m9 9 6 6"/></svg>
<div class="abs" style="left:23px;top:707.3px;width:387px;height:78px;background:#fff;border:2px solid #e5e7eb;border-radius:20px"></div>
<svg class="abs" style="left:41.700000000000045px;top:735.8px;" width="20" height="20" viewBox="0 0 24 24" fill="none" stroke="#4b5563" stroke-width="2" stroke-linecap="round" stroke-linejoin="round"><line x1="4" x2="20" y1="12" y2="12"/><line x1="4" x2="20" y1="6" y2="6"/><line x1="4" x2="20" y1="18" y2="18"/></svg>
<div class="t" style="left:79.40000000000009px;top:738.79px;font-size:17.5px;line-height:17.5px;color:#1f2937;font-weight:400;letter-spacing:0.5px;-webkit-text-stroke:0.2px #1f2937;">2.</div>
<div class="t" style="left:105.79999999999995px;top:738.79px;font-size:17.5px;line-height:17.5px;color:#1f2937;font-weight:400;letter-spacing:0.5px;-webkit-text-stroke:0.2px #1f2937;">Claim Currency</div>
<svg class="abs" style="left:358.79999999999995px;top:735.8px;" width="20" height="20" viewBox="0 0 24 24" fill="none" stroke="#d63a3a" stroke-width="1.6" stroke-linecap="round" stroke-linejoin="round"><circle cx="12" cy="12" r="10"/><path d="m15 9-6 6"/><path d="m9 9 6 6"/></svg>
<div class="abs" style="left:23px;top:796.3px;width:387px;height:78px;background:#fff;border:2px solid #e5e7eb;border-radius:20px"></div>
<svg class="abs" style="left:41.700000000000045px;top:824.8px;" width="20" height="20" viewBox="0 0 24 24" fill="none" stroke="#4b5563" stroke-width="2" stroke-linecap="round" stroke-linejoin="round"><line x1="4" x2="20" y1="12" y2="12"/><line x1="4" x2="20" y1="6" y2="6"/><line x1="4" x2="20" y1="18" y2="18"/></svg>
<div class="t" style="left:79.40000000000009px;top:827.79px;font-size:17.5px;line-height:17.5px;color:#1f2937;font-weight:400;letter-spacing:0.5px;-webkit-text-stroke:0.2px #1f2937;">3.</div>
<div class="t" style="left:105.79999999999995px;top:827.79px;font-size:17.5px;line-height:17.5px;color:#1f2937;font-weight:400;letter-spacing:0.5px;-webkit-text-stroke:0.2px #1f2937;">Claim Status</div>
<svg class="abs" style="left:358.79999999999995px;top:824.8px;" width="20" height="20" viewBox="0 0 24 24" fill="none" stroke="#d63a3a" stroke-width="1.6" stroke-linecap="round" stroke-linejoin="round"><circle cx="12" cy="12" r="10"/><path d="m15 9-6 6"/><path d="m9 9 6 6"/></svg>
</div>
<svg class="abs" style="left:1611.35px;top:161.5px" width="12.3" height="9.5"><polygon points="6.15,1.2 11.100000000000001,8.3 1.2,8.3" fill="#8a8a8a" stroke="#8a8a8a" stroke-width="2.4" stroke-linejoin="round"/></svg>
<div class="abs" style="left:1612px;top:178px;width:11px;height:510px;background:#8a8a8a;border-radius:6px"></div>
<svg class="abs" style="left:1611.4499999999998px;top:953.3px" width="12.3" height="9.2"><polygon points="1.2,1.2 11.100000000000001,1.2 6.15,7.999999999999999" fill="#8a8a8a" stroke="#8a8a8a" stroke-width="2.4" stroke-linejoin="round"/></svg>
</body></html>
